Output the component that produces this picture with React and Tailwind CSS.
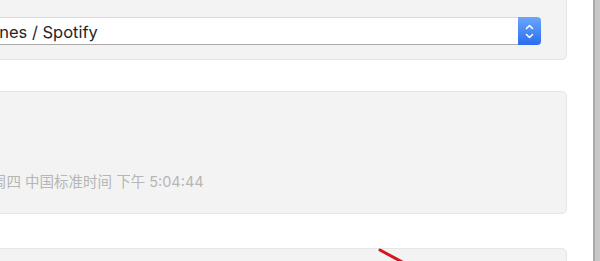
export default function App() {
  return (
    <div className="flex h-[261px] w-[600px] overflow-hidden bg-white font-['Inter','Noto_Sans_CJK_SC',sans-serif]">
      <div className="relative flex-1 overflow-hidden pr-[26px]">
        {/* Player panel */}
        <div className="-ml-[20px] -mt-[30px] h-[90px] rounded-[5px] border border-[#e4e4e4] bg-[#f3f3f3] pl-[20px] pr-[25px] pt-[46px]">
          <div className="flex h-[28px] -ml-[20px]">
            <div className="flex flex-1 items-center overflow-hidden border-t border-b border-t-[#dcdcdc] border-b-[#a9a9a9] bg-white pt-[2px]">
              <span className="ml-[-5px] whitespace-nowrap text-[16.5px] leading-none text-[#262626]">iTunes / Spotify</span>
            </div>
            <div className="flex w-[23px] flex-col items-center justify-center rounded-r-[4px] bg-gradient-to-b from-[#6aa6fa] to-[#2b6cef]">
              <svg width="9" height="17" viewBox="0 0 9 17" fill="none" stroke="white" strokeWidth="1.6" strokeLinecap="round" strokeLinejoin="round">
                <path d="M1.5 5.5 L4.5 2.5 L7.5 5.5" />
                <path d="M1.5 11.5 L4.5 14.5 L7.5 11.5" />
              </svg>
            </div>
          </div>
        </div>

        {/* Time panel */}
        <div className="-ml-[20px] mt-[31px] flex h-[123px] flex-col justify-end rounded-[5px] border border-[#e6e6e6] bg-[#f3f3f3] pb-[21px]">
          <div className="ml-[11px] whitespace-nowrap text-[14.5px] leading-[20px] text-[#b6b6b6]">周四 中国标准时间 下午 5:04:44</div>
        </div>

        {/* Next panel */}
        <div className="-ml-[20px] mt-[34px] h-[40px] rounded-[5px] border border-[#e6e6e6] bg-[#f3f3f3]" />

        <svg className="absolute left-[376px] top-[247px]" width="30" height="18" viewBox="0 0 30 18">
          <path d="M4 3 L28 16" stroke="#d8141e" strokeWidth="3" strokeLinecap="round" />
        </svg>
      </div>
      <div className="w-[7px] border-l-2 border-[#a9a9a9] bg-[#c7c7c7]" />
    </div>
  )
}
